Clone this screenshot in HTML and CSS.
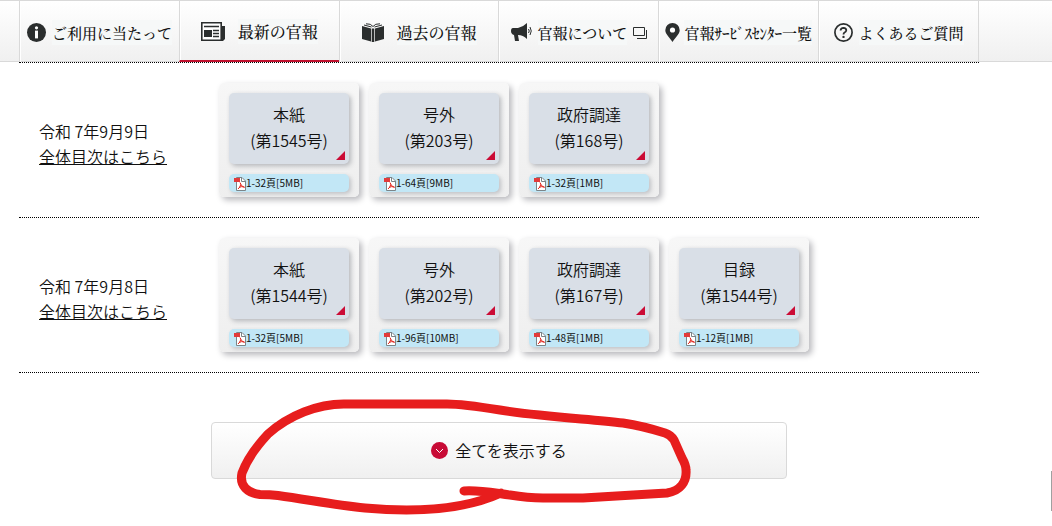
FILE: index.html
```html
<!DOCTYPE html>
<html lang="ja">

<head>
    <meta charset="UTF-8">
    <meta name="viewport" content="width=device-width, initial-scale=1.0">
    <link rel="stylesheet" href="styles.css">
    <title>官報</title>
</head>

<body>
    <header class="header">
        <nav class="nav">
            <a class="nav-item" href="#">
                <svg width="19" height="19" viewBox="0 0 19 19">
                    <circle cx="9.5" cy="9.5" r="9.5" fill="#2b2e2e" />
                    <circle cx="9.5" cy="4.8" r="1.6" fill="#fff" />
                    <path d="M8 7.6h3v7.8H8z" fill="#fff" />
                </svg>
                <span>ご利用に当たって</span>
            </a>
            <a class="nav-item wide active" href="#">
                <svg width="24" height="19" viewBox="0 0 24 19">
                    <path d="M.8.8h19.4v17.4H.8z" fill="#fff" stroke="#2b2e2e" stroke-width="1.6" />
                    <path d="M21 4h3v13l-2 2h-2z" fill="#2b2e2e" />
                    <path d="M3 8h8v7H3z" fill="#2b2e2e" />
                    <path d="M3 4.5h15M12 8.5h6M12 11.5h6M12 14.5h6" stroke="#2b2e2e" stroke-width="1.4" />
                </svg>
                <span>最新の官報</span>
            </a>
            <a class="nav-item wide" href="#">
                <svg width="22" height="19" viewBox="0 0 22 19">
                    <path d="M0 3l9 2.500v13L0 16zM22 3l-9 2.500v13L22 16zM9.700 5.500h2.600V19H9.700z" fill="#2b2e2e" />
                    <path d="M2 2L9.500 4M20 2L12.500 4M4 .8Q9 .5 11 3.500Q13 .5 18 .8" fill="none" stroke="#2b2e2e" />
                </svg>
                <span>過去の官報</span>
            </a>
            <a class="nav-item" href="#">
                <svg width="21" height="19" viewBox="0 0 21 19">
                    <path d="M2 5H7Q12 4 16 0V16Q12 12 7 12L8 18H4L3 12Q0 11 0 8Q0 5 2 5z" fill="#2b2e2e" />
                    <path d="M17.5 6Q19 8 17.5 10M19 4Q21.5 8 19 12" fill="none" stroke="#2b2e2e" />
                </svg>
                <span>官報について</span>
                <svg width="14" height="12" viewBox="0 0 14 12">
                    <path d="M.5.5h11v8H.5zM13.5 3v8.5H4" fill="none" stroke="#2b2e2e" />
                </svg>
            </a>
            <a class="nav-item tight" href="#">
                <svg width="15" height="19" viewBox="0 0 15 19">
                    <path d="M7.5 0A7.2 7.2 0 0 1 14.7 7.2C14.7 11 10 15 7.5 19C5 15 .3 11 .3 7.2A7.2 7.2 0 0 1 7.5 0z" fill="#2b2e2e" />
                    <circle cx="7.5" cy="7" r="2.6" fill="#fff" />
                </svg>
                <span>官報ｻｰﾋﾞｽｾﾝﾀｰ一覧</span>
            </a>
            <a class="nav-item" href="#">
                <svg width="19" height="19" viewBox="0 0 19 19">
                    <circle cx="9.5" cy="9.5" r="8.6" fill="none" stroke="#2b2e2e" stroke-width="1.7" />
                    <path d="M6.6 7.5Q6.7 4.8 9.5 4.8Q12.3 4.9 12.3 7.3Q12.2 8.8 10.6 9.5Q9.5 10 9.5 11.5" fill="none" stroke="#2b2e2e" stroke-width="1.8" />
                    <circle cx="9.5" cy="13.9" r="1.2" fill="#2b2e2e" />
                </svg>
                <span>よくあるご質問</span>
            </a>
        </nav>
    </header>

    <svg class="defs" width="0" height="0">
        <symbol id="pdf" viewBox="0 0 12 15">
            <path d="M2.5 1.5H8l3.500 3.500v9.500h-9z" fill="#fff" stroke="#7b8488" />
            <path d="M7.5 1.5v4H11" fill="none" stroke="#7b8488" />
            <path d="M0 2h6v4H0z" fill="#e23b3b" />
            <path d="M6 6.500Q6.500 10 10.500 11.500M6.800 8.500Q6 11.500 4 13M5 11.500Q7.500 10 10.500 11" fill="none" stroke="#e2231a" />
        </symbol>
    </svg>

    <main class="main">
        <section class="day">
            <div class="date">
                <p>令和 7年9月9日</p>
                <a href="#">全体目次はこちら</a>
            </div>
            <div class="cards">
                <div class="card">
                    <a class="issue" href="#">本紙<br>(第1545号)</a>
                    <a class="pdf" href="#"><svg width="12" height="15"><use href="#pdf" /></svg>1-32頁[5MB]</a>
                </div>
                <div class="card">
                    <a class="issue" href="#">号外<br>(第203号)</a>
                    <a class="pdf" href="#"><svg width="12" height="15"><use href="#pdf" /></svg>1-64頁[9MB]</a>
                </div>
                <div class="card">
                    <a class="issue" href="#">政府調達<br>(第168号)</a>
                    <a class="pdf" href="#"><svg width="12" height="15"><use href="#pdf" /></svg>1-32頁[1MB]</a>
                </div>
            </div>
        </section>
        <section class="day">
            <div class="date">
                <p>令和 7年9月8日</p>
                <a href="#">全体目次はこちら</a>
            </div>
            <div class="cards">
                <div class="card">
                    <a class="issue" href="#">本紙<br>(第1544号)</a>
                    <a class="pdf" href="#"><svg width="12" height="15"><use href="#pdf" /></svg>1-32頁[5MB]</a>
                </div>
                <div class="card">
                    <a class="issue" href="#">号外<br>(第202号)</a>
                    <a class="pdf" href="#"><svg width="12" height="15"><use href="#pdf" /></svg>1-96頁[10MB]</a>
                </div>
                <div class="card">
                    <a class="issue" href="#">政府調達<br>(第167号)</a>
                    <a class="pdf" href="#"><svg width="12" height="15"><use href="#pdf" /></svg>1-48頁[1MB]</a>
                </div>
                <div class="card">
                    <a class="issue" href="#">目録<br>(第1544号)</a>
                    <a class="pdf" href="#"><svg width="12" height="15"><use href="#pdf" /></svg>1-12頁[1MB]</a>
                </div>
            </div>
        </section>
        <button class="show-all" type="button">
            <svg width="17" height="17" viewBox="0 0 17 17">
                <circle cx="8.5" cy="8.5" r="8.5" fill="#c80b36" />
                <path d="M5 7l3.500 3.500L12 7" fill="none" stroke="#fff" />
            </svg>
            全てを表示する
        </button>
    </main>

    <!-- hand-drawn ring round the button -->
    <svg class="marker" width="460" height="120" viewBox="232 396 460 120">
        <path d="M464 491C480 490 494 493 510 495Q528 498 543 498H583L667 493C680 491 687 482 686 470Q686 465 682 458L674 440Q671 435 665 433Q643 426 623 423C590 419 545 417 500 410Q462 404 447 404H347C318 403 288 416 268 434C254 449 246 462 242 473C239 486 248 493 260 494.500Q270 494.500 278 495.500C310 500 335 505 365 508C410 512 462 511 501 493" />
    </svg>
    <div class="scroll-mark"></div>
</body>

</html>
```
FILE: styles.css
```css
* {
    margin: 0;
    padding: 0;
    box-sizing: border-box;
}

body {
    position: relative;
    min-height: 100vh;
    background: #fff;
    color: #111;
    font-family: "Noto Sans CJK JP", sans-serif;
    font-size: 16px;
    font-weight: 350;
    line-height: 25px;
}

a {
    color: inherit;
}

.header {
    height: 62px;
    border-top: 1px solid #d9d9d9;
    border-bottom: 1px solid #d9d9d9;
    background: linear-gradient(#fff, #f0f0f0);
}

.nav {
    display: flex;
    max-width: 960px;
    height: 61px;
    margin-left: 19px;
}

.nav-item {
    flex: 1;
    display: flex;
    align-items: center;
    justify-content: center;
    gap: 6px;
    padding-top: 2px;
    border-left: 1px solid #d9d9d9;
    box-shadow: inset 1px 0 #fff;
    color: #111;
    font-family: "Noto Serif CJK JP", "Noto Sans CJK JP", serif;
    font-size: 15px;
    font-weight: 500;
    text-decoration: none;
    white-space: nowrap;
}

.nav-item:last-child {
    border-right: 1px solid #d9d9d9;
}

.nav-item.wide {
    gap: 13px;
    font-size: 16px;
}

.nav-item.tight {
    gap: 4px;
}

.nav-item.active {
    border-bottom: 2px solid #c0122f;
}

.nav-item span {
    background: #f6f8f8;
}

.defs {
    position: absolute;
}

.main {
    max-width: 960px;
    margin-left: 19px;
    border-top: 1px dotted #000;
}

.day {
    display: flex;
    align-items: center;
    padding: 20px 0;
    border-bottom: 1px dotted #000;
}

.date {
    width: 200px;
    padding: 8px 0 0 20px;
}

.cards {
    display: flex;
    gap: 10px;
}

.card {
    width: 140px;
    padding: 10px 10px 5px;
    border-radius: 5px;
    background: linear-gradient(#f7f7f7, #eee);
    box-shadow: 3px 3px 6px #b8b8bc;
}

.issue {
    position: relative;
    display: block;
    height: 71px;
    padding-top: 8px;
    border-radius: 5px;
    background: #d9dfe7;
    box-shadow: 2px 2px 5px #b4b6ba;
    line-height: 26px;
    text-align: center;
    text-decoration: none;
}

.issue::after {
    content: "";
    position: absolute;
    right: 4px;
    bottom: 4px;
    border-left: 9px solid transparent;
    border-bottom: 9px solid #cb0c36;
}

.pdf {
    display: flex;
    align-items: center;
    height: 18px;
    margin-top: 10px;
    padding: 0 5px 1px;
    border-radius: 5px;
    background: #c2e7f6;
    box-shadow: 2px 2px 4px #c0c2c6;
    font-size: 10px;
    font-weight: 400;
    line-height: 17px;
    text-decoration: none;
}

.pdf svg {
    align-self: flex-end;
}

.show-all {
    display: flex;
    align-items: center;
    justify-content: center;
    gap: 7px;
    width: 60%;
    height: 57px;
    margin: 49px auto 0;
    border: 1px solid #d9d9d9;
    border-radius: 4px;
    background: linear-gradient(#fff, #f0f0f0);
    color: inherit;
    font: inherit;
    cursor: pointer;
}

.marker {
    position: absolute;
    top: 396px;
    left: 232px;
    pointer-events: none;
}

.marker path {
    fill: none;
    stroke: #e71d1d;
    stroke-width: 9;
    stroke-linecap: round;
    stroke-linejoin: round;
}

.scroll-mark {
    position: absolute;
    top: 471px;
    right: 0;
    width: 1px;
    height: 40px;
    background: #a0a0a0;
}
```
